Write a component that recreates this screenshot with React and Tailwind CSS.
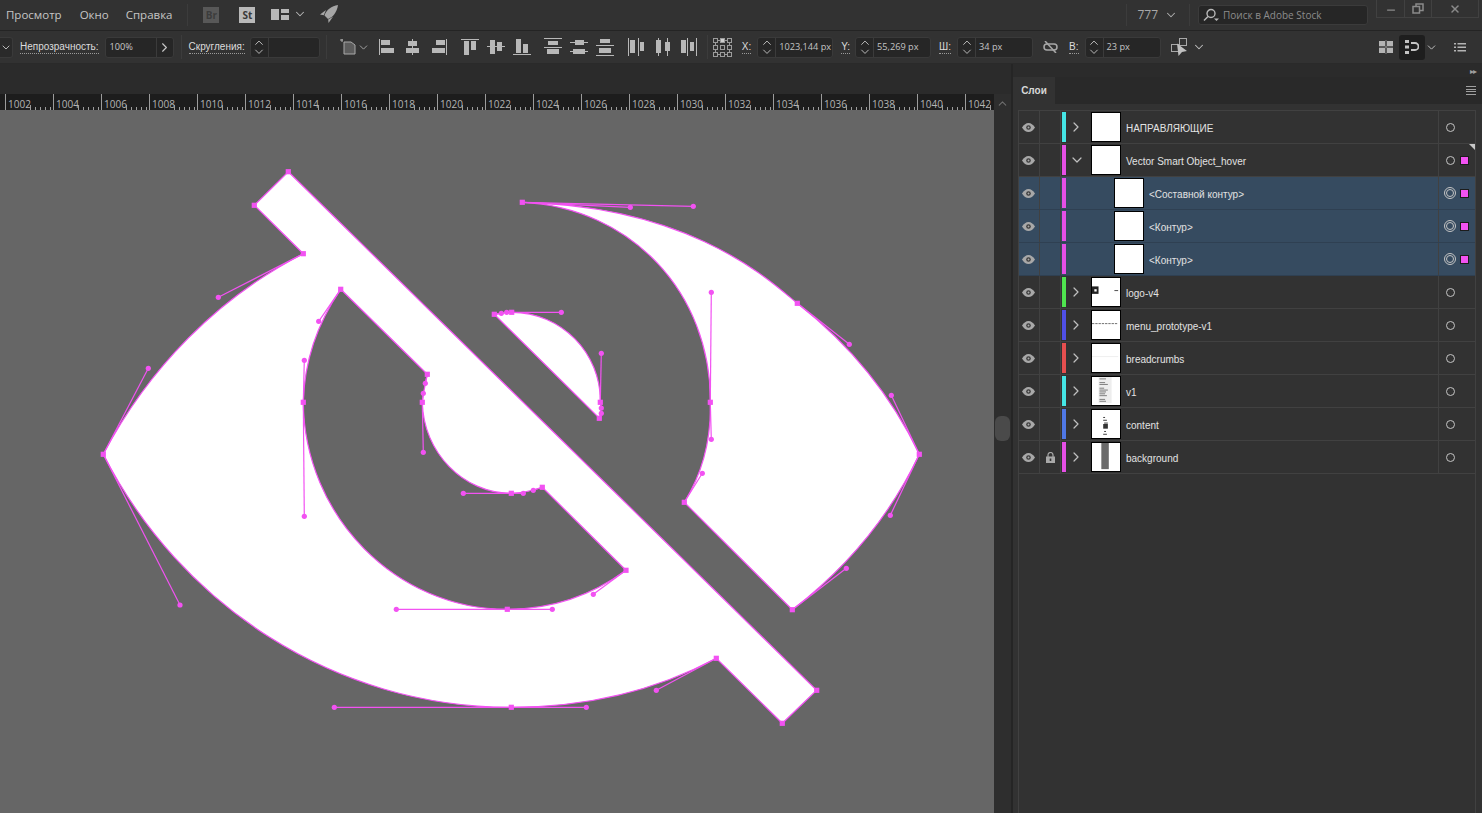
import { ChevronDown, ChevronRight, ChevronUp, X, Minus } from "lucide-react";

const PINK = "#f252f2";

const rulerLabels = [];
for (let n = 1002; n <= 1042; n += 2) rulerLabels.push(n);

const layers = [
  { name: "НАПРАВЛЯЮЩИЕ", bar: "bg-[#45e6e6]", state: "closed" },
  { name: "Vector Smart Object_hover", bar: "bg-[#e64fe6]", state: "open", marked: true, corner: true },
  { name: "<Составной контур>", bar: "bg-[#e64fe6]", child: true },
  { name: "<Контур>", bar: "bg-[#e64fe6]", child: true },
  { name: "<Контур>", bar: "bg-[#e64fe6]", child: true },
  { name: "logo-v4", bar: "bg-[#4fe64f]", state: "closed", thumb: "logo" },
  { name: "menu_prototype-v1", bar: "bg-[#4f4fe6]", state: "closed", thumb: "menu" },
  { name: "breadcrumbs", bar: "bg-[#e64f4f]", state: "closed", thumb: "crumbs" },
  { name: "v1", bar: "bg-[#45e6e6]", state: "closed", thumb: "v1" },
  { name: "content", bar: "bg-[#4f78e6]", state: "closed", thumb: "content" },
  { name: "background", bar: "bg-[#e64fe6]", state: "closed", thumb: "background", locked: true },
];

const anchors = [
  [288.3, 171.7], [254.3, 205.3], [303.3, 253.7], [103.3, 454.3], [511.3, 707.3], [716.3, 658.3], [782.3, 723.3], [816.7, 690.3],
  [340.7, 289.3], [427.3, 374.3], [422.3, 402.3], [511.3, 493.3], [542.3, 487.3], [626, 570.3], [507.3, 609.3], [303.3, 402.3],
  [522.3, 202.3], [797.3, 303.3], [919.3, 454.3], [792.3, 609.7], [684.3, 502.3], [710.3, 402.3],
  [494.3, 314.3], [511.7, 312.3], [600.3, 402.3], [599.3, 418.3],
];

// anchor -> handle
const handles = [
  [303.3, 253.7, 218.3, 297.3], [103.3, 454.3, 148.3, 368.3], [103.3, 454.3, 180, 605],
  [511.3, 707.3, 334.3, 707.3], [511.3, 707.3, 586.3, 707.3], [716.3, 658.3, 656.3, 690.3],
  [340.7, 289.3, 318.7, 321.3], [303.3, 402.3, 304.3, 360.3], [303.3, 402.3, 304.3, 516.3],
  [427.3, 374.3, 425.3, 383.3], [422.3, 402.3, 423.3, 393.3], [422.3, 402.3, 423.3, 452.3],
  [511.3, 493.3, 463.3, 493.3], [511.3, 493.3, 523.3, 493.3], [542.3, 487.3, 533.3, 490.3],
  [626, 570.3, 593.3, 594.3], [507.3, 609.3, 552.3, 609.3], [507.3, 609.3, 396.3, 609.3],
  [522.3, 202.3, 693.3, 206.3], [522.3, 202.3, 630.3, 207.3], [797.3, 303.3, 849.3, 344.3],
  [919.3, 454.3, 891.3, 395.3], [919.3, 454.3, 890.3, 515.3], [792.3, 609.7, 846.3, 568.3],
  [684.3, 502.3, 702.3, 473.3], [710.3, 402.3, 711.3, 439.3], [710.3, 402.3, 711.3, 292.3],
  [494.3, 314.3, 501.3, 313.3], [511.7, 312.3, 506.7, 312.3], [511.7, 312.3, 561.3, 312.3],
  [600.3, 402.3, 601.3, 353.3], [600.3, 402.3, 601.3, 408], [599.3, 418.3, 601.3, 413.3],
];

const Divider = ({ className }) => <div className={`w-px self-stretch my-1 bg-[#3c3c3c] ${className}`} />;

const Label = ({ children, className = "" }) => (
  <span className={`font-['Liberation_Sans',sans-serif] text-[10px] leading-[12px] text-[#dcdcdc] border-b border-dotted border-[#9a9a9a] ${className}`}>
    {children}
  </span>
);

const Spinner = () => (
  <div className="flex w-[18px] h-full shrink-0 flex-col items-center justify-center border-r border-[#3b3b3b] text-[#c8c8c8]">
    <ChevronUp size={14} strokeWidth={1.6} className="-my-[2px]" />
    <ChevronDown size={14} strokeWidth={1.6} className="-my-[2px]" />
  </div>
);

const Field = ({ value, className = "" }) => (
  <div className={`flex h-[21px] items-center rounded-[3px] border border-[#3a3a3a] bg-[#262626] ${className}`}>
    <Spinner />
    <span className="ml-[3px] text-[9.2px] text-[#c4c4c4] whitespace-nowrap">{value}</span>
  </div>
);

const AlignIcon = ({ children }) => (
  <svg width="18" height="18" viewBox="0 0 18 18" className="shrink-0 fill-[#b8b8b8]">
    {children}
  </svg>
);

const alignGroups = [
  [
    <><rect x="0" y="1" width="1" height="16" /><rect x="2" y="2" width="9" height="5" /><rect x="2" y="10" width="13" height="5" /></>,
    <><rect x="7" y="1" width="1" height="16" /><rect x="3" y="3" width="9" height="5" /><rect x="1" y="10" width="13" height="5" /></>,
    <><rect x="15" y="1" width="1" height="16" /><rect x="5" y="2" width="9" height="5" /><rect x="1" y="10" width="13" height="5" /></>,
  ],
  [
    <><rect x="0" y="1" width="18" height="1" /><rect x="3" y="3" width="5" height="14" /><rect x="10" y="3" width="5" height="9" /></>,
    <><rect x="0" y="8" width="18" height="1" /><rect x="3" y="2" width="5" height="14" /><rect x="10" y="4" width="5" height="9" /></>,
    <><rect x="0" y="16" width="18" height="1" /><rect x="3" y="1" width="5" height="14" /><rect x="10" y="6" width="5" height="9" /></>,
  ],
  [
    <><rect x="0" y="0" width="18" height="1" /><rect x="4" y="3" width="10" height="4" /><rect x="0" y="9" width="18" height="1" /><rect x="3" y="11" width="12" height="5" /></>,
    <><rect x="0" y="4" width="18" height="1" /><rect x="5" y="2" width="9" height="5" /><rect x="0" y="13" width="18" height="1" /><rect x="3" y="11" width="12" height="5" /></>,
    <><rect x="4" y="1" width="10" height="4" /><rect x="0" y="7" width="18" height="1" /><rect x="3" y="10" width="12" height="5" /><rect x="0" y="17" width="18" height="1" /></>,
  ],
  [
    <><rect x="0" y="0" width="1" height="18" /><rect x="2" y="2" width="5" height="13" /><rect x="10" y="0" width="1" height="18" /><rect x="12" y="4" width="4" height="9" /></>,
    <><rect x="4" y="0" width="1" height="18" /><rect x="2" y="2" width="5" height="13" /><rect x="13" y="0" width="1" height="18" /><rect x="11" y="4" width="5" height="9" /></>,
    <><rect x="1" y="2" width="5" height="13" /><rect x="7" y="0" width="1" height="18" /><rect x="10" y="4" width="4" height="9" /><rect x="16" y="0" width="1" height="18" /></>,
  ],
];

const AnchorGrid = () => (
  <svg width="19" height="19" viewBox="0 0 19 19" className="ml-[5px] shrink-0 fill-none stroke-[#9c9c9c]">
    {[0.5, 7.5, 14.5].map((y) =>
      [0.5, 7.5, 14.5].map((x) => (
        <rect key={`${x}-${y}`} x={x} y={y} width="4" height="4" className={x === 7.5 && y === 0.5 ? "fill-[#d0d0d0]" : ""} />
      ))
    )}
    <path d="M5 2.5h2M12 2.5h2M5 16.5h2M12 16.5h2M2.5 5v2M2.5 12v2M16.5 5v2M16.5 12v2" />
  </svg>
);

const TopBar = () => (
  <div className="flex h-[31px] shrink-0 items-center border-b border-[#242424] text-[11.5px] text-[#c6c6c6]">
    <span className="ml-[6px]">Просмотр</span>
    <span className="ml-[18px]">Окно</span>
    <span className="ml-[17px]">Справка</span>
    <Divider className="ml-[15px]" />
    <div className="ml-[15px] flex h-4 w-4 items-center justify-center bg-[#585858] text-[10px] font-bold text-[#3c3c3c]">Br</div>
    <div className="ml-[20px] flex h-4 w-4 items-center justify-center bg-[#b9b9b9] text-[10px] font-bold text-[#3a3a3a]">St</div>
    <svg width="18" height="11" viewBox="0 0 18 11" className="ml-[16px] mb-[2px] shrink-0 fill-[#b8b8b8]">
      <rect x="0" y="0" width="8" height="11" />
      <rect x="10" y="0" width="8" height="4" />
      <rect x="10" y="6" width="8" height="5" />
    </svg>
    <ChevronDown size={14} strokeWidth={1.8} className="ml-[4px] mb-[2px] text-[#b8b8b8]" />
    <svg width="18" height="18" viewBox="0 0 18 18" className="ml-[13px] mb-[2px] shrink-0 fill-[#a6a6a6]">
      <path d="M18 0C11.5 1 6.5 4.5 4.5 10.5L8 14C13.5 12 17 6.5 18 0Z" />
      <path d="M0 9.5L6 5L3.8 10.2Z" />
      <path d="M8.5 18L13 11.8L8.2 14.5Z" />
    </svg>
    <div className="ml-auto flex h-full items-center pr-[3px]">
      <Divider />
      <span className="ml-[10px] text-[12px] text-[#a8a8a8]">777</span>
      <ChevronDown size={14} strokeWidth={1.8} className="ml-[6px] text-[#b0b0b0]" />
      <Divider className="ml-[11px]" />
      <div className="ml-[8px] flex h-[20px] w-[170px] items-center rounded-[3px] border border-[#3b3b3b] bg-[#262626] pl-[4px]">
        <svg width="16" height="14" viewBox="0 0 16 14" className="shrink-0 fill-none stroke-[#b8b8b8] stroke-[1.4]">
          <circle cx="8" cy="5.5" r="4" />
          <path d="M5 8.5L1 12.5" />
          <path d="M11 10.5h5l-2.5 2.5Z" className="fill-[#b8b8b8] stroke-none" />
        </svg>
        <span className="ml-[4px] text-[10px] text-[#8c8c8c] whitespace-nowrap">Поиск в Adobe Stock</span>
      </div>
      <div className="ml-[8px] flex h-[18px] self-start border-x border-b border-[#414141] text-[#8a8a8a]">
        <div className="flex w-[28px] items-center justify-center border-r border-[#414141]">
          <Minus size={12} strokeWidth={2.5} className="mt-[3px]" />
        </div>
        <div className="flex w-[27px] items-center justify-center border-r border-[#414141]">
          <svg width="12" height="11" viewBox="0 0 12 11" className="fill-none stroke-[#8a8a8a] stroke-[1.5]">
            <rect x="1" y="3.5" width="6.5" height="6.5" />
            <path d="M4 3V1h7v6.5H8" />
          </svg>
        </div>
        <div className="flex w-[46px] items-center justify-center">
          <X size={12} strokeWidth={3} />
        </div>
      </div>
    </div>
  </div>
);

const OptionsBar = () => (
  <div className="flex h-[33px] shrink-0 items-center border-b border-[#2a2a2a]">
    <div className="flex h-[21px] w-[13px] items-center justify-end rounded-r-[3px] border border-l-0 border-[#3a3a3a] bg-[#2a2a2a] text-[#c8c8c8]">
      <ChevronDown size={13} strokeWidth={1.8} />
    </div>
    <Label className="ml-[7px]">Непрозрачность:</Label>
    <div className="ml-[6px] flex h-[21px] w-[69px] items-center rounded-[3px] border border-[#3a3a3a] bg-[#262626]">
      <span className="ml-[4px] w-[46px] text-[9.2px] text-[#c8c8c8]">100%</span>
      <div className="flex h-full flex-1 items-center justify-center border-l border-[#3b3b3b] text-[#c8c8c8]">
        <ChevronRight size={15} strokeWidth={1.8} />
      </div>
    </div>
    <Divider className="ml-[7px]" />
    <Label className="ml-[7px]">Скругления:</Label>
    <Field value="" className="ml-[5px] w-[70px]" />
    <Divider className="ml-[6px]" />
    <svg width="16" height="16" viewBox="0 0 16 16" className="ml-[13px] shrink-0">
      <path d="M4 3h7l4 3v9H4Z" fill="#5c5c5c" stroke="#a8a8a8" />
      <path d="M0 1h3M2 0v3" stroke="#b0b0b0" />
    </svg>
    <ChevronDown size={13} strokeWidth={1.6} className="ml-[1px] text-[#b0b0b0]" />
    <div className="ml-[9px] flex items-center">
      {alignGroups.map((group, i) => (
        <div key={i} className={`flex gap-2 ${i === 0 ? "" : i === 1 ? "ml-3" : i === 2 ? "ml-[13px]" : "ml-[14px]"}`}>
          {group.map((icon, j) => (
            <AlignIcon key={j}>{icon}</AlignIcon>
          ))}
        </div>
      ))}
    </div>
    <Divider className="ml-[9px]" />
    <AnchorGrid />
    <Label className="ml-[10px]">X:</Label>
    <Field value="1023,144 px" className="ml-[6px] w-[76px]" />
    <Label className="ml-[8px]">Y:</Label>
    <Field value="55,269 px" className="ml-[5px] w-[76px]" />
    <Label className="ml-[8px]">Ш:</Label>
    <Field value="34 px" className="ml-[6px] w-[76px]" />
    <svg width="15" height="12" viewBox="0 0 15 12" className="ml-[10px] shrink-0 fill-none stroke-[#a8a8a8] stroke-[1.5]">
      <rect x="1" y="3" width="13" height="6" rx="3" />
      <path d="M2 0L13 12" />
    </svg>
    <Label className="ml-[11px]">В:</Label>
    <Field value="23 px" className="ml-[6px] w-[76px]" />
    <svg width="17" height="18" viewBox="0 0 17 18" className="ml-[10px] shrink-0 fill-none stroke-[#a8a8a8]">
      <rect x="0.5" y="6.5" width="7" height="7" />
      <rect x="8.5" y="0.5" width="7" height="7" />
      <path d="M6 5.5L16 13L11 14L7.5 18Z" className="fill-[#c0c0c0] stroke-none" />
    </svg>
    <ChevronDown size={14} strokeWidth={1.8} className="ml-[4px] text-[#c0c0c0]" />
    <div className="ml-auto mr-[16px] flex items-center">
      <svg width="14" height="14" viewBox="0 0 14 14" className="shrink-0 fill-[#b4b4b4]">
        <rect x="0" y="1" width="6" height="5" />
        <rect x="8" y="1" width="6" height="5" />
        <rect x="0" y="8" width="6" height="5" />
        <rect x="8" y="8" width="6" height="5" />
        <rect x="6.7" y="0" width="0.6" height="14" />
        <rect x="0" y="6.7" width="14" height="0.6" />
      </svg>
      <div className="ml-[6px] flex h-[25px] w-[26px] items-center justify-center rounded-[3px] bg-[#1e1e1e]">
        <svg width="14" height="14" viewBox="0 0 14 14" className="fill-[#c4c4c4]">
          <rect x="0" y="0" width="4" height="3" />
          <rect x="0" y="5.5" width="4" height="3" />
          <rect x="0" y="11" width="4" height="3" />
          <path d="M6 3h4a3.5 3.5 0 0 1 0 7H6" fill="none" stroke="#c4c4c4" strokeWidth="1.8" />
        </svg>
      </div>
      <ChevronDown size={13} strokeWidth={1.8} className="text-[#c0c0c0]" />
      <svg width="12" height="9" viewBox="0 0 12 9" className="ml-[16px] shrink-0 fill-[#b4b4b4]">
        <rect x="0" y="0" width="2" height="1.5" /><rect x="3.5" y="0" width="8.5" height="1.5" />
        <rect x="0" y="3.5" width="2" height="1.5" /><rect x="3.5" y="3.5" width="8.5" height="1.5" />
        <rect x="0" y="7" width="2" height="1.5" /><rect x="3.5" y="7" width="8.5" height="1.5" />
      </svg>
    </div>
  </div>
);

const RulerCell = ({ label }) => (
  <div className="relative h-full w-12 shrink-0 border-l border-[#9c9c9c] pl-[2px] pt-[5px]">
    <span className="block text-[10px] leading-[11px] text-[#b4b4b4]">{label}</span>
    <svg width="48" height="5" viewBox="0 0 48 5" className="absolute bottom-0 left-0 stroke-[#9c9c9c]">
      <path d="M24.5 0v5M29.5 2v3M34.5 2v3M39.5 2v3M44.5 2v3" />
    </svg>
  </div>
);

const Artwork = () => (
  <svg viewBox="0 110 994 703" className="block h-full w-full">
    <g fill="#fff" stroke={PINK} strokeWidth="1.2" fillRule="evenodd">
      <path d="M288.3 171.7L254.3 205.3L303.3 253.7C218.3 297.3 148.3 368.3 103.3 454.3C180 605 334.3 707.3 511.3 707.3C586.3 707.3 656.3 690.3 716.3 658.3L782.3 723.3L816.7 690.3ZM340.7 289.3L427.3 374.3C425.3 383.3 423.3 393.3 422.3 402.3C423.3 452.3 463.3 493.3 511.3 493.3C523.3 493.3 533.3 490.3 542.3 487.3L626 570.3C593.3 594.3 552.3 609.3 507.3 609.3C396.3 609.3 304.3 516.3 303.3 402.3C304.3 360.3 318.7 321.3 340.7 289.3Z" />
      <path d="M522.3 202.3C693.3 206.3 771 282 797.3 303.3C849.3 344.3 891.3 395.3 919.3 454.3C890.3 515.3 846.3 568.3 792.3 609.7L684.3 502.3C702.3 473.3 711.3 439.3 710.3 402.3C711.3 292.3 630.3 207.3 522.3 202.3Z" />
      <path d="M494.3 314.3C501.3 313.3 506.7 312.3 511.7 312.3C561.3 312.3 601.3 353.3 600.3 402.3C601.3 408 601.3 413.3 599.3 418.3Z" />
    </g>
    <g stroke={PINK} strokeWidth="1.2">
      {handles.map(([x1, y1, x2, y2], i) => (
        <line key={i} x1={x1} y1={y1} x2={x2} y2={y2} />
      ))}
    </g>
    <g fill={PINK}>
      {handles.map(([, , x, y], i) => (
        <circle key={i} cx={x} cy={y} r="2.6" />
      ))}
      {anchors.map(([x, y], i) => (
        <rect key={i} x={x - 2.6} y={y - 2.6} width="5.2" height="5.2" />
      ))}
    </g>
  </svg>
);

const ThumbArt = ({ kind }) => {
  if (kind === "logo")
    return (
      <>
        <rect x="0" y="9" width="7" height="8" fill="#222" />
        <rect x="2.5" y="12" width="2.5" height="2.5" fill="#fff" />
        <rect x="24" y="13" width="4" height="1" fill="#444" />
      </>
    );
  if (kind === "menu") return <path d="M0 13.5H28" stroke="#666" strokeDasharray="2.5 1" />;
  if (kind === "crumbs") return <rect x="0" y="13" width="28" height="1" fill="#eee" />;
  if (kind === "v1")
    return (
      <>
        <rect x="7" y="0" width="14" height="28" fill="#ededed" />
        <path d="M8 2h7M8 6h6M8 8h9M8 12h5M8 14h9M8 16h7M8 18h6M8 20h8M8 24h6M8 26h7" stroke="#777" />
      </>
    );
  if (kind === "content")
    return (
      <>
        <path d="M12 8h2M12 11h4M13 14h4M13 23h2M12 26h4" stroke="#333" />
        <rect x="12" y="15" width="5" height="5" fill="#333" />
      </>
    );
  if (kind === "background") return <rect x="10" y="0" width="8" height="28" fill="#6a6a6a" />;
  return null;
};

const Eye = () => (
  <svg width="13" height="9" viewBox="0 0 13 9" className="mr-[1px] shrink-0">
    <path d="M0 4.5C2 1.5 4 0 6.5 0S11 1.5 13 4.5C11 7.5 9 9 6.5 9S2 7.5 0 4.5Z" fill="#a8a8a8" />
    <circle cx="6.5" cy="4.5" r="2.3" fill="#3a3a3a" />
    <circle cx="6.5" cy="4.5" r="1" fill="#a8a8a8" />
  </svg>
);

const Lock = () => (
  <svg width="9" height="11" viewBox="0 0 9 11" className="shrink-0">
    <path d="M2 5V3a2.5 2.5 0 0 1 5 0v2" fill="none" stroke="#a8a8a8" strokeWidth="1.2" />
    <rect x="0" y="4.5" width="9" height="6.5" fill="#a8a8a8" />
    <rect x="3.7" y="6.5" width="1.6" height="2.5" fill="#333" />
  </svg>
);

const LayerRow = ({ layer }) => (
  <div className={`relative flex h-[33px] items-center border-b ${layer.child ? "bg-[#364b60] border-[#2f4052]" : "border-[#414141]"}`}>
    <div className="flex h-full w-[21px] shrink-0 items-center justify-center border-r border-[#414141]">
      <Eye />
    </div>
    <div className="flex h-full w-[21px] shrink-0 items-center justify-center border-r border-[#414141]">
      {layer.locked && <Lock />}
    </div>
    <div className={`ml-[1px] h-[30px] w-[3.5px] shrink-0 ${layer.bar}`} />
    <div className="flex w-[25.5px] shrink-0 items-center justify-center text-[#c0c0c0]">
      {layer.state === "closed" && <ChevronRight size={16} strokeWidth={1.8} className="ml-[-5px]" />}
      {layer.state === "open" && <ChevronDown size={16} strokeWidth={1.8} className="ml-[-2px]" />}
    </div>
    <svg
      width="30"
      height="30"
      viewBox="0 0 30 30"
      className={`shrink-0 border border-black bg-white ${layer.child ? "ml-[23px]" : ""}`}
    >
      {layer.thumb && <ThumbArt kind={layer.thumb} />}
    </svg>
    <span className="ml-[5px] mt-[2px] font-['Liberation_Sans',sans-serif] text-[10px] text-[#e2e2e2] whitespace-nowrap">{layer.name}</span>
    <div className="ml-auto flex h-full w-[37px] shrink-0 items-center border-l border-[#414141] pl-[5px]">
      {layer.child ? (
        <div className="flex h-[12px] w-[12px] shrink-0 items-center justify-center rounded-full border border-[#c4c4c4]">
          <div className="h-[8px] w-[8px] rounded-full border border-[#c4c4c4]" />
        </div>
      ) : (
        <div className="ml-[2px] h-[9px] w-[9px] shrink-0 rounded-full border border-[#c4c4c4]" />
      )}
      {(layer.child || layer.marked) && (
        <div className={`h-[9px] w-[9px] shrink-0 border border-[#1c1c1c] bg-[#f252f2] ${layer.child ? "ml-[4px]" : "ml-[5px]"}`} />
      )}
    </div>
    {layer.corner && (
      <div className="absolute right-0 top-0 h-0 w-0 border-l-[6px] border-t-[6px] border-l-transparent border-t-[#c8c8c8]" />
    )}
  </div>
);

const LayersPanel = () => (
  <div className="flex min-w-0 flex-1 flex-col border-l-2 border-[#252525] bg-[#323232]">
    <div className="flex h-[13px] shrink-0 items-center justify-end bg-[#2b2b2b] pr-[6px] text-[8px] leading-none tracking-[-1px] text-[#a0a0a0]">
      ▸▸
    </div>
    <div className="flex h-[27px] shrink-0 items-stretch bg-[#292929]">
      <div className="flex w-[42px] items-center justify-center bg-[#323232] font-['Liberation_Sans',sans-serif] text-[10px] font-bold text-[#d8d8d8]">Слои</div>
      <div className="ml-auto mr-[6px] flex flex-col justify-center gap-[1.5px]">
        <div className="h-px w-[10px] bg-[#a0a0a0]" />
        <div className="h-px w-[10px] bg-[#a0a0a0]" />
        <div className="h-px w-[10px] bg-[#a0a0a0]" />
        <div className="h-px w-[10px] bg-[#a0a0a0]" />
      </div>
    </div>
    <div className="ml-[5px] mr-[6px] mt-[6px] flex-1 border-x border-t border-[#414141]">
      {layers.map((layer, i) => (
        <LayerRow key={i} layer={layer} />
      ))}
    </div>
  </div>
);

export default function App() {
  return (
    <div className="flex h-[813px] w-[1482px] flex-col overflow-hidden bg-[#323232] font-['Open_Sans',sans-serif]">
      <TopBar />
      <OptionsBar />
      <div className="flex min-h-0 flex-1">
        <div className="flex w-[1011px] shrink-0 flex-col bg-[#2b2b2b]">
          <div className="h-[30px] shrink-0" />
          <div className="flex min-h-0 flex-1">
            <div className="flex w-[994px] shrink-0 flex-col">
              <div className="flex h-4 shrink-0 overflow-hidden bg-[#1d1d1d] pl-[5px]">
                {rulerLabels.map((n) => (
                  <RulerCell key={n} label={n} />
                ))}
              </div>
              <div className="min-h-0 flex-1 bg-[#666666]">
                <Artwork />
              </div>
            </div>
            <div className="flex flex-1 flex-col items-center bg-[#2e2e2e]">
              <ChevronUp size={13} strokeWidth={2} className="mt-[3px] text-[#6e6e6e]" />
              <div className="mt-[306px] h-[25px] w-[15px] rounded-[6px] bg-[#4a4a4a]" />
            </div>
          </div>
        </div>
        <LayersPanel />
      </div>
    </div>
  );
}
